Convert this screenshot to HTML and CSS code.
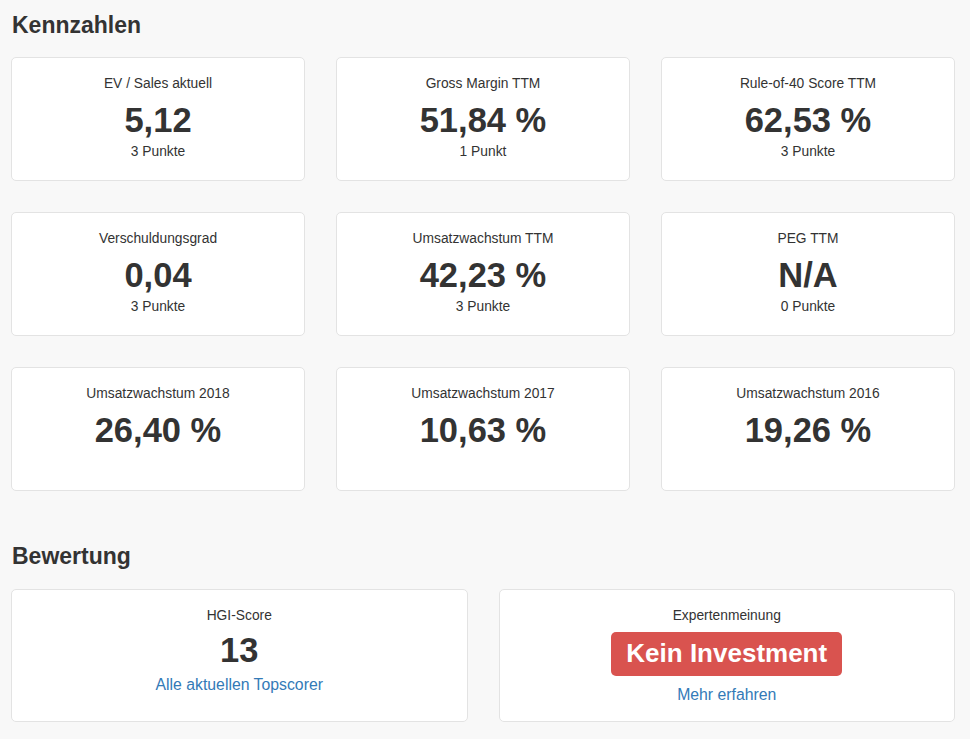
FILE: index.html
```html
<!DOCTYPE html>
<html lang="de">
<head>
<meta charset="utf-8">
<title>Kennzahlen</title>
<link rel="stylesheet" href="styles.css">
</head>
<body>
<div class="page">
  <h2 class="section first">Kennzahlen</h2>
  <div class="grid3">
    <div class="card"><div class="label">EV / Sales aktuell</div><div class="value">5,12</div><div class="points">3 Punkte</div></div>
    <div class="card"><div class="label">Gross Margin TTM</div><div class="value">51,84 %</div><div class="points">1 Punkt</div></div>
    <div class="card"><div class="label">Rule-of-40 Score TTM</div><div class="value">62,53 %</div><div class="points">3 Punkte</div></div>
    <div class="card"><div class="label">Verschuldungsgrad</div><div class="value">0,04</div><div class="points">3 Punkte</div></div>
    <div class="card"><div class="label">Umsatzwachstum TTM</div><div class="value">42,23 %</div><div class="points">3 Punkte</div></div>
    <div class="card"><div class="label">PEG TTM</div><div class="value">N/A</div><div class="points">0 Punkte</div></div>
    <div class="card"><div class="label">Umsatzwachstum 2018</div><div class="value">26,40 %</div></div>
    <div class="card"><div class="label">Umsatzwachstum 2017</div><div class="value">10,63 %</div></div>
    <div class="card"><div class="label">Umsatzwachstum 2016</div><div class="value">19,26 %</div></div>
  </div>
  <h2 class="section second">Bewertung</h2>
  <div class="grid2">
    <div class="card tall">
      <div class="label">HGI-Score</div>
      <div class="value score">13</div>
      <a class="link link-score" href="#">Alle aktuellen Topscorer</a>
    </div>
    <div class="card tall">
      <div class="label">Expertenmeinung</div>
      <div class="badge-wrap"><span class="badge">Kein Investment</span></div>
      <a class="link link-more" href="#">Mehr erfahren</a>
    </div>
  </div>
</div>
</body>
</html>
```
FILE: styles.css
```css
html, body {
  margin: 0;
  padding: 0;
  background: #f8f8f8;
}
body {
  font-family: "Liberation Sans", Arial, sans-serif;
  color: #333;
}
.page {
  width: 944px;
  margin-left: 11px;
}
.section {
  font-size: 23px;
  font-weight: bold;
  line-height: 30px;
  margin: 0;
  padding-left: 1px;
  color: #333;
}
.section.first {
  margin-top: 10px;
  margin-bottom: 17px;
}
.section.second {
  margin-top: 50px;
  margin-bottom: 18px;
}
.grid3 {
  display: grid;
  grid-template-columns: repeat(3, 1fr);
  column-gap: 31px;
  row-gap: 31px;
}
.grid2 {
  display: grid;
  grid-template-columns: 1fr 1fr;
  column-gap: 31px;
}
.card {
  box-sizing: border-box;
  height: 124px;
  background: #fff;
  border: 1px solid #e3e3e3;
  border-radius: 5px;
  padding-top: 16px;
  text-align: center;
  display: flex;
  flex-direction: column;
  align-items: center;
}
.card.tall {
  height: 133px;
}
.label {
  font-size: 13.8px;
  line-height: 20px;
}
.value {
  font-size: 34.5px;
  font-weight: bold;
  line-height: 44px;
  margin-top: 4px;
}
.value.score {
  margin-top: 2px;
}
.points {
  font-size: 13.8px;
  line-height: 20px;
}
.link {
  color: #337ab7;
  text-decoration: none;
  font-size: 15.8px;
  line-height: 20px;
}
.link-score {
  margin-top: 3px;
}
.badge-wrap {
  margin-top: 6px;
}
.badge {
  display: inline-block;
  background: #d9534f;
  color: #fff;
  font-size: 26px;
  font-weight: bold;
  line-height: 42px;
  height: 44px;
  box-sizing: border-box;
  padding: 0 15px 2px;
  border-radius: 5px;
}
.link-more {
  margin-top: 9px;
}
```
